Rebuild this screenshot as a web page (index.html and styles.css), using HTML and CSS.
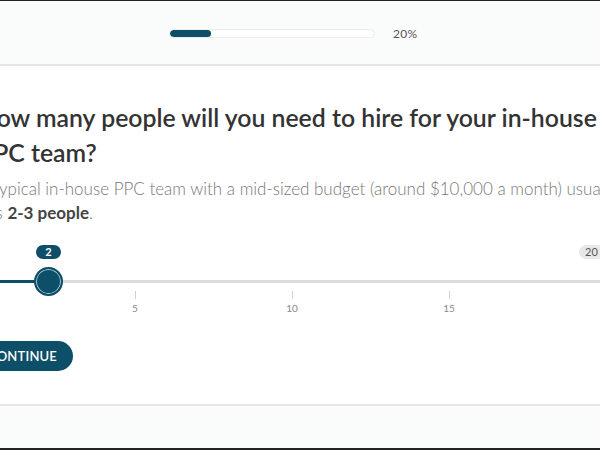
FILE: index.html
```html
<!DOCTYPE html>
<html lang="en">
<head>
<meta charset="utf-8">
<title>Quiz</title>
<link rel="stylesheet" href="styles.css">
</head>
<body>
<div class="frame">
  <header class="top">
    <div class="progress"><div class="progress-fill" style="width:20%"></div></div>
    <span class="progress-label">20%</span>
  </header>
  <main class="card">
    <div class="content">
      <h1 class="question">How many people will you need to hire for your in-house PPC team?</h1>
      <p class="hint">A typical in-house PPC team with a mid-sized budget (around $10,000 a month) usually has <strong>2-3 people</strong>.</p>
      <div class="slider">
        <span class="pill pill-min">1</span>
        <span class="pill pill-max">20</span>
        <span class="bubble" style="left:70px">2</span>
        <div class="track"><div class="track-fill" style="width:70px"></div></div>
        <span class="thumb" style="left:70px"></span>
        <div class="ticks">
          <span class="tick" style="left:157px"><i></i>5</span>
          <span class="tick" style="left:314px"><i></i>10</span>
          <span class="tick" style="left:471px"><i></i>15</span>
          <span class="tick" style="left:628px"><i></i>20</span>
        </div>
      </div>
      <button class="continue">Continue</button>
    </div>
  </main>
  <footer class="bottom"></footer>
</div>
</body>
</html>
```

FILE: styles.css
```css
* { box-sizing: border-box; }
html, body { margin: 0; padding: 0; }
body {
  width: 600px;
  height: 450px;
  overflow: hidden;
  font-family: Lato, "Open Sans", sans-serif;
  background: #ffffff;
}
.frame {
  height: 450px;
  display: flex;
  flex-direction: column;
  border-top: 1px solid #222;
  border-bottom: 2px solid #222;
}
.top {
  height: 65px;
  flex: none;
  background: #fafbfb;
  border-bottom: 2px solid #e6e6e6;
  display: flex;
  align-items: center;
  padding-left: 169px;
  padding-top: 2px;
  gap: 18px;
}
.progress {
  width: 206px;
  height: 9px;
  border-radius: 5px;
  background: #fff;
  border: 1px solid #ececec;
  overflow: hidden;
}
.progress-fill {
  height: 100%;
  background: #0d4f68;
  border-radius: 5px;
}
.progress-label {
  font-size: 12px;
  color: #555;
  letter-spacing: 0.3px;
}
.card {
  flex: 1;
  background: #fff;
  overflow: hidden;
}
.content {
  width: 652px;
  margin-left: -22px;
  padding-top: 34px;
}
.question {
  margin: 0;
  font-size: 24.8px;
  line-height: 35px;
  font-weight: 600;
  color: #333;
}
.hint {
  margin: 7px 0 0;
  font-size: 17px;
  line-height: 24px;
  font-weight: 300;
  color: #777;
}
.hint strong { color: #444; font-weight: 700; }
.slider {
  position: relative;
  height: 116px;
  width: 628px;
}
.pill {
  position: absolute;
  top: 20px;
  height: 14px;
  line-height: 14px;
  padding: 0 6px;
  border-radius: 7px;
  background: #e8e8e8;
  color: #555;
  font-size: 11px;
}
.pill-min { left: 0; }
.pill-max { left: 601px; }
.bubble {
  position: absolute;
  top: 20px;
  width: 25px;
  margin-left: -12px;
  height: 14px;
  line-height: 14px;
  border-radius: 7px;
  background: #0d4f68;
  color: #fff;
  font-size: 11px;
  font-weight: 700;
  text-align: center;
}
.track {
  position: absolute;
  top: 55px;
  left: 0;
  right: -30px;
  height: 3px;
  background: #dcdcdc;
}
.track-fill { height: 100%; background: #0d4f68; }
.thumb {
  position: absolute;
  top: 42px;
  width: 29px;
  height: 29px;
  margin-left: -14px;
  border-radius: 50%;
  background: #0d4f68;
  border: 2px solid #0d4f68;
  box-shadow: inset 0 0 0 1px #a9cdd6;
}
.tick {
  position: absolute;
  top: 66px;
  width: 20px;
  margin-left: -10px;
  display: flex;
  flex-direction: column;
  align-items: center;
  font-size: 10px;
  color: #888;
  gap: 3px;
}
.tick i {
  display: block;
  width: 1px;
  height: 8px;
  background: #d0d0d0;
}
.continue {
  display: block;
  margin: 0 0 0 -6px;
  height: 30px;
  padding: 0 16px;
  border: none;
  border-radius: 15px;
  background: #0d4f68;
  color: #fff;
  font-family: Lato, sans-serif;
  font-size: 13px;
  font-weight: 600;
  text-transform: uppercase;
  letter-spacing: 0.2px;
}
.bottom {
  height: 44px;
  flex: none;
  background: #fafbfb;
  border-top: 2px solid #e6e6e6;
}
```
